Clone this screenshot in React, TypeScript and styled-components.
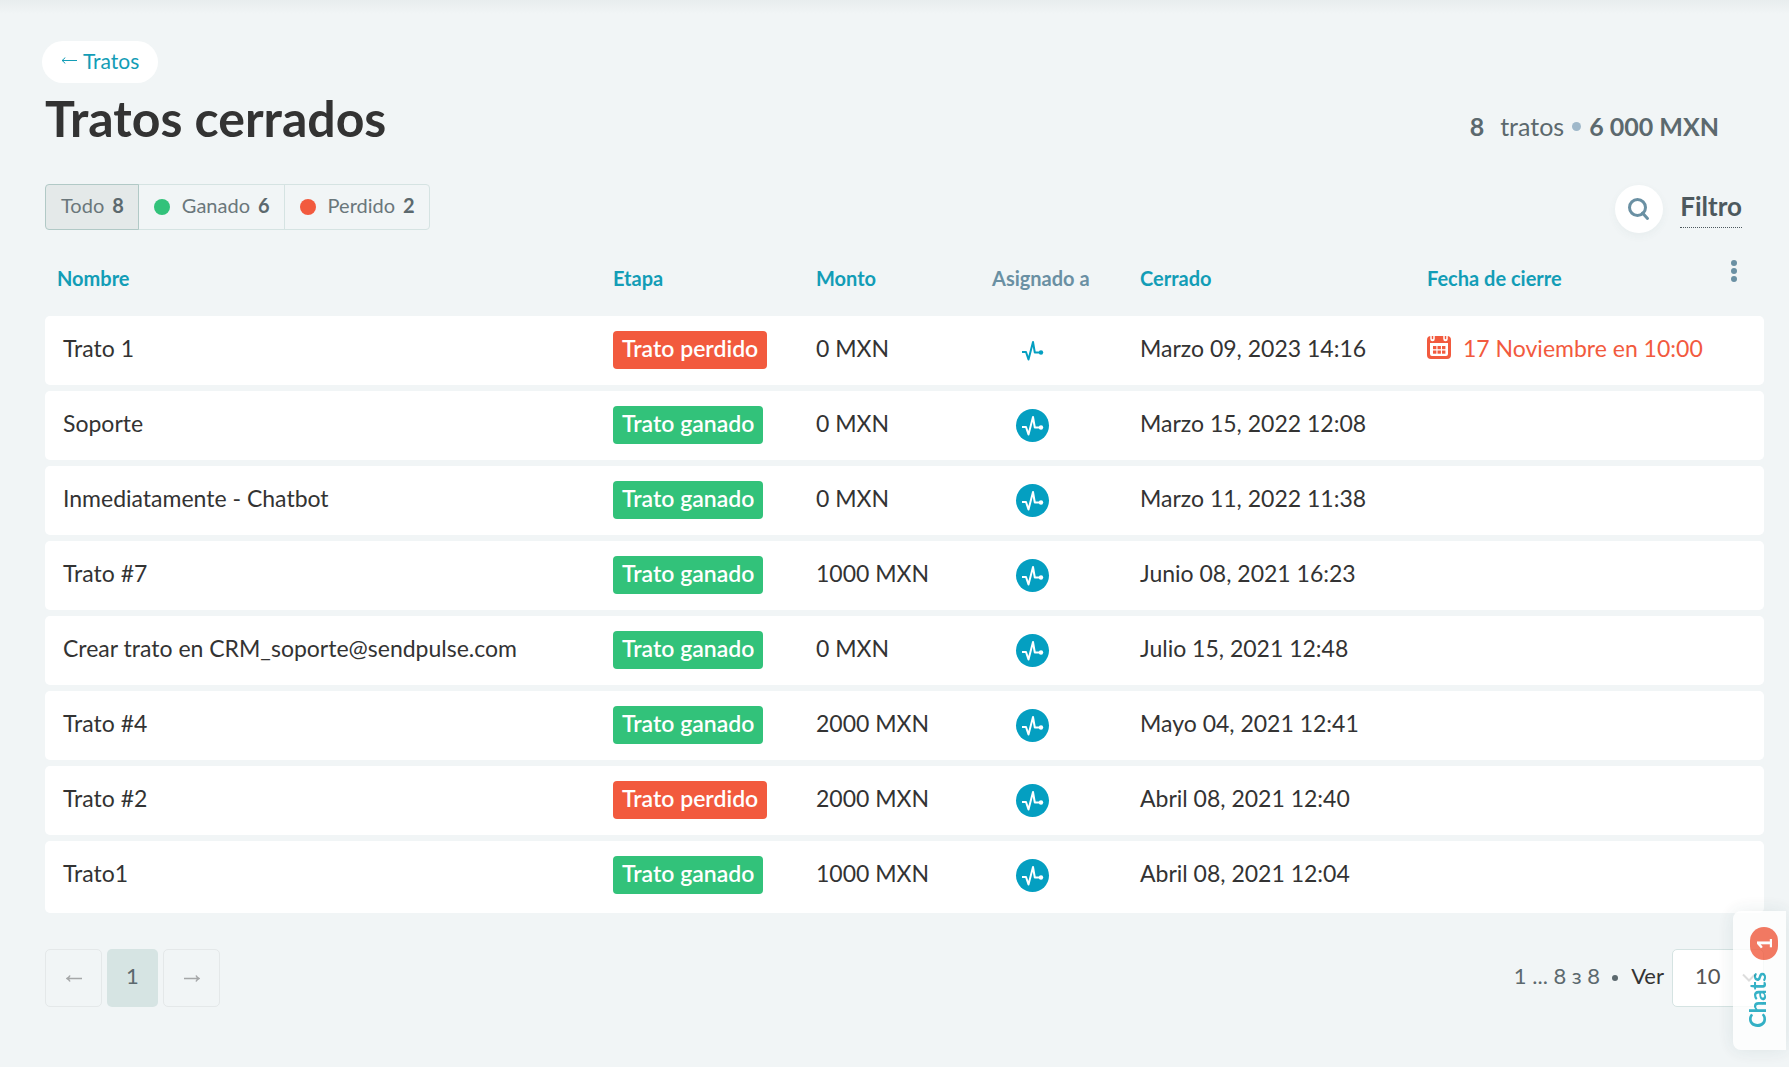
import React from "react";
import styled, { createGlobalStyle } from "styled-components";

const GlobalStyle = createGlobalStyle`
  *, *::before, *::after { box-sizing: border-box; }
  body {
    margin: 0;
    background: #f1f5f6;
    color: #333333;
    font-family: Lato, "Open Sans", sans-serif;
    font-size: 23px;
  }
  button, select { font: inherit; color: inherit; cursor: pointer; }
  a { text-decoration: none; }
`;

const Page = styled.div`
  position: relative;
  min-height: 100vh;
  padding: 41px 25px 60px 45px;
  background: linear-gradient(#e8edee, #f1f5f6 14px);
`;

const BackLink = styled.a`
  display: inline-flex;
  align-items: center;
  gap: 6px;
  height: 42px;
  margin-left: -3px;
  padding: 0 19px 4px 19px;
  border-radius: 21px;
  background: #ffffff;
  color: #139db6;
  font-size: 21px;
`;

const Header = styled.header`
  display: flex;
  align-items: flex-end;
  justify-content: space-between;
  padding: 5px 45px 0 0;
`;

const Title = styled.h1`
  margin: 0;
  font-size: 50px;
  line-height: 60px;
  font-weight: 700;
`;

const Summary = styled.div`
  display: flex;
  align-items: center;
  gap: 8px;
  padding-bottom: 7px;
  color: #5c696e;
  font-size: 25px;
  line-height: 30px;
`;

const Count = styled.strong`
  margin-right: 8px;
`;

const Dot = styled.span<{ $size: number; $color: string }>`
  flex: none;
  width: ${(p) => p.$size}px;
  height: ${(p) => p.$size}px;
  border-radius: 50%;
  background: ${(p) => p.$color};
`;

const Toolbar = styled.div`
  display: flex;
  align-items: flex-start;
  justify-content: space-between;
  margin-top: 36px;
  padding-right: 22px;
`;

const Tabs = styled.div`
  display: flex;
`;

const Tab = styled.button<{ $active?: boolean }>`
  display: flex;
  align-items: center;
  height: 46px;
  margin-left: -1px;
  padding: 0 14px 0 15px;
  border: 1px solid ${(p) => (p.$active ? "#b1c9c6" : "#d5e3e2")};
  background: ${(p) => (p.$active ? "#e4e9e9" : "transparent")};
  color: #6a777b;
  font-size: 20px;
  z-index: ${(p) => (p.$active ? 1 : 0)};
  &:first-child { margin-left: 0; border-radius: 4px 0 0 4px; }
  &:last-child { border-radius: 0 4px 4px 0; }
`;

const TabText = styled.span`
  display: flex;
  gap: 8px;
  padding-bottom: 5px;
  ${Dot} + & { margin-left: 12px; }
  strong { color: #5c696e; }
`;

const Actions = styled.div`
  display: flex;
  align-items: center;
  gap: 17px;
  padding-top: 1px;
`;

const SearchButton = styled.button`
  display: flex;
  align-items: center;
  justify-content: center;
  width: 48px;
  height: 48px;
  padding: 0;
  border: 0;
  border-radius: 50%;
  background: #ffffff;
  box-shadow: 0 3px 8px rgba(60, 90, 100, 0.05);
`;

const FilterButton = styled.button`
  padding: 0 0 4px;
  border: 0;
  border-bottom: 1px dotted #4d595e;
  background: none;
  color: #4d595e;
  font-size: 26px;
  line-height: 33px;
  font-weight: 700;
`;

const Table = styled.table`
  width: 100%;
  table-layout: fixed;
  border-collapse: separate;
  border-spacing: 0 6px;
`;

const Col = styled.col<{ $width?: number }>`
  width: ${(p) => (p.$width ? `${p.$width}px` : "auto")};
`;

const HeadCell = styled.th<{ $muted?: boolean }>`
  height: 71px;
  padding: 6px 0 0 12px;
  text-align: left;
  color: ${(p) => (p.$muted ? "#6a90a3" : "#139db6")};
  font-size: 20px;
  font-weight: 700;
  white-space: nowrap;
`;

const MenuButton = styled.button`
  display: flex;
  flex-direction: column;
  align-items: center;
  gap: 2px;
  margin: 0 0 14px 9px;
  padding: 0 4px;
  border: 0;
  background: none;
`;

const Cell = styled.td<{ $indent?: number; $centered?: boolean }>`
  height: 69px;
  padding: ${(p) => (p.$centered ? 0 : "0 0 6px")};
  padding-left: ${(p) => p.$indent ?? 12}px;
  background: #ffffff;
  white-space: nowrap;
  tr:last-child > & {
    height: 72px;
    padding-bottom: ${(p) => (p.$centered ? 3 : 9)}px;
  }
  &:first-child { border-radius: 5px 0 0 5px; }
  &:last-child { border-radius: 0 5px 5px 0; }
`;

const Stage = styled.span<{ $won: boolean }>`
  display: block;
  width: max-content;
  height: 38px;
  margin-bottom: 2px;
  padding: 0 9px;
  border-radius: 4px;
  background: ${(p) => (p.$won ? "#32c27a" : "#f25a3e")};
  color: #ffffff;
  font-weight: 600;
  line-height: 34px;
`;

const Avatar = styled.span<{ $filled: boolean }>`
  display: flex;
  width: 33px;
  height: 33px;
  border-radius: 50%;
  background: ${(p) => (p.$filled ? "#049fc1" : "transparent")};
  color: ${(p) => (p.$filled ? "#ffffff" : "#049fc1")};
`;

const DueDate = styled.span`
  display: flex;
  align-items: center;
  gap: 12px;
  color: #f25a3e;
`;

const Footer = styled.footer`
  display: flex;
  align-items: center;
  justify-content: space-between;
  margin-top: 30px;
  color: #5c696e;
  font-size: 22px;
`;

const Pager = styled.nav`
  display: flex;
  gap: 5px;
`;

const PageButton = styled.button<{ $current?: boolean }>`
  display: flex;
  align-items: center;
  justify-content: center;
  width: ${(p) => (p.$current ? 51 : 57)}px;
  height: 58px;
  padding: 0 0 ${(p) => (p.$current ? 5 : 0)}px;
  border: ${(p) => (p.$current ? "0" : "1px solid #e4e8e9")};
  border-radius: 5px;
  background: ${(p) => (p.$current ? "#d6e4e3" : "transparent")};
  color: ${(p) => (p.$current ? "#5c696e" : "#a5a7a8")};
`;

const PageSize = styled.div`
  display: flex;
  align-items: center;
`;

const Range = styled.span`
  margin-right: 12px;
  padding-bottom: 5px;
`;

const SizeLabel = styled.label`
  margin: 0 8px 0 13px;
  padding-bottom: 5px;
  color: #333333;
`;

const SelectBox = styled.div`
  display: grid;
  align-items: center;
  width: 92px;
  > * { grid-area: 1 / 1; }
  > svg { justify-self: end; margin-right: 8px; pointer-events: none; }
`;

const SizeSelect = styled.select`
  width: 100%;
  height: 58px;
  padding: 0 0 5px 22px;
  border: 1px solid #d5e3e2;
  border-radius: 5px;
  background: #ffffff;
  color: #555555;
  appearance: none;
`;

const ChatTab = styled.button`
  position: fixed;
  right: 3px;
  bottom: 17px;
  display: flex;
  flex-direction: column;
  align-items: center;
  gap: 12px;
  width: 53px;
  height: 139px;
  padding: 16px 0 0;
  border: 0;
  border-radius: 8px 0 0 8px;
  background: #ffffff;
  box-shadow: 0 0 18px rgba(60, 90, 100, 0.14);
  color: #049fb9;
  opacity: 0.8;
`;

const Sideways = styled.span`
  margin-right: 4px;
  writing-mode: vertical-rl;
  transform: rotate(180deg);
  font-size: 22px;
  line-height: 26px;
  font-weight: 700;
`;

const ChatBadge = styled.span`
  display: flex;
  align-items: center;
  justify-content: center;
  width: 28px;
  height: 33px;
  margin-left: 9px;
  border-radius: 14px;
  background: #f25a3e;
  color: #ffffff;
  font-size: 20px;
  font-weight: 900;
  > span {
    writing-mode: vertical-rl;
    transform: rotate(180deg);
    line-height: 24px;
  }
`;

function Arrow({ right, stroke = 1 }: { right?: boolean; stroke?: number }) {
  return (
    <svg width="16" height="10" viewBox="0 0 16 10" fill="none" stroke="currentColor" strokeWidth={stroke} aria-hidden="true">
      {right ? (
        <path d="M0 5.500h15M12 2.500q1 2 3 3q-2 1-3 3" />
      ) : (
        <path d="M16 5.500H1M4 2.500q-1 2-3 3q2 1 3 3" />
      )}
    </svg>
  );
}

function SearchIcon() {
  return (
    <svg width="24" height="24" viewBox="0 0 24 24" fill="none" stroke="#6a90a3" strokeWidth="3" strokeLinecap="round" aria-hidden="true">
      <circle cx="10.500" cy="10.500" r="8" />
      <path d="M15.500 16l5 5.500" />
    </svg>
  );
}

function PulseIcon() {
  return (
    <svg width="33" height="33" viewBox="0 0 33 33" fill="none" stroke="currentColor" strokeWidth="2" strokeLinejoin="round" aria-hidden="true">
      <path d="M6 18h4l2.500 7.500L17 8l1.800 10.500H25" />
      <circle cx="25" cy="18.500" r="2.200" fill="currentColor" stroke="none" />
    </svg>
  );
}

function CalendarIcon() {
  return (
    <svg width="24" height="24" viewBox="0 0 24 24" aria-hidden="true">
      <path fill="currentColor" fillRule="evenodd" d="M4 0h16a4 4 0 0 1 4 4v15a4 4 0 0 1-4 4H4a4 4 0 0 1-4-4V4a4 4 0 0 1 4-4zM3 7v11q0 2 2 2h14q2 0 2-2V7z" />
      <path d="M5.500 0v3M18.500 0v3" stroke="#ffffff" strokeWidth="4.500" strokeLinecap="round" />
      <path d="M5.500 0v2.500M18.500 0v2.500" stroke="currentColor" strokeWidth="1.500" strokeLinecap="round" />
      <g fill="currentColor">
        {[10, 14.5].map((y) => [6, 10.5, 15].map((x) => <rect key={`${x}-${y}`} x={x} y={y} width="3.400" height="3.200" />))}
      </g>
    </svg>
  );
}

interface Deal {
  name: string;
  won: boolean;
  amount: string;
  closed: string;
  due?: string;
}

const deals: Deal[] = [
  { name: "Trato 1", won: false, amount: "0 MXN", closed: "Marzo 09, 2023 14:16", due: "17 Noviembre en 10:00" },
  { name: "Soporte", won: true, amount: "0 MXN", closed: "Marzo 15, 2022 12:08" },
  { name: "Inmediatamente - Chatbot", won: true, amount: "0 MXN", closed: "Marzo 11, 2022 11:38" },
  { name: "Trato #7", won: true, amount: "1000 MXN", closed: "Junio 08, 2021 16:23" },
  { name: "Crear trato en CRM_soporte@sendpulse.com", won: true, amount: "0 MXN", closed: "Julio 15, 2021 12:48" },
  { name: "Trato #4", won: true, amount: "2000 MXN", closed: "Mayo 04, 2021 12:41" },
  { name: "Trato #2", won: false, amount: "2000 MXN", closed: "Abril 08, 2021 12:40" },
  { name: "Trato1", won: true, amount: "1000 MXN", closed: "Abril 08, 2021 12:04" },
];

export default function App() {
  return (
    <>
      <GlobalStyle />
      <Page>
        <BackLink href="#tratos">
          <Arrow />
          Tratos
        </BackLink>
        <Header>
          <Title>Tratos cerrados</Title>
          <Summary>
            <Count>8</Count>
            <span>tratos</span>
            <Dot $size={9} $color="#9fb8ca" />
            <strong>6 000 MXN</strong>
          </Summary>
        </Header>
        <Toolbar>
          <Tabs>
            <Tab $active>
              <TabText>Todo <strong>8</strong></TabText>
            </Tab>
            <Tab>
              <Dot $size={16} $color="#32c27a" />
              <TabText>Ganado <strong>6</strong></TabText>
            </Tab>
            <Tab>
              <Dot $size={16} $color="#f25a3e" />
              <TabText>Perdido <strong>2</strong></TabText>
            </Tab>
          </Tabs>
          <Actions>
            <SearchButton aria-label="Buscar">
              <SearchIcon />
            </SearchButton>
            <FilterButton>Filtro</FilterButton>
          </Actions>
        </Toolbar>
        <Table>
          <colgroup>
            <Col />
            <Col $width={203} />
            <Col $width={176} />
            <Col $width={148} />
            <Col $width={287} />
            <Col $width={291} />
            <Col $width={58} />
          </colgroup>
          <thead>
            <tr>
              <HeadCell>Nombre</HeadCell>
              <HeadCell>Etapa</HeadCell>
              <HeadCell>Monto</HeadCell>
              <HeadCell $muted>Asignado a</HeadCell>
              <HeadCell>Cerrado</HeadCell>
              <HeadCell>Fecha de cierre</HeadCell>
              <HeadCell>
                <MenuButton aria-label="Columnas">
                  <Dot $size={6} $color="#6a90a3" />
                  <Dot $size={6} $color="#6a90a3" />
                  <Dot $size={6} $color="#6a90a3" />
                </MenuButton>
              </HeadCell>
            </tr>
          </thead>
          <tbody>
            {deals.map((deal, index) => (
              <tr key={deal.name}>
                <Cell $indent={18}>{deal.name}</Cell>
                <Cell $centered>
                  <Stage $won={deal.won}>{deal.won ? "Trato ganado" : "Trato perdido"}</Stage>
                </Cell>
                <Cell>{deal.amount}</Cell>
                <Cell $centered $indent={36}>
                  <Avatar $filled={index > 0}>
                    <PulseIcon />
                  </Avatar>
                </Cell>
                <Cell>{deal.closed}</Cell>
                <Cell>
                  {deal.due && (
                    <DueDate>
                      <CalendarIcon />
                      {deal.due}
                    </DueDate>
                  )}
                </Cell>
                <Cell />
              </tr>
            ))}
          </tbody>
        </Table>
        <Footer>
          <Pager aria-label="Páginas">
            <PageButton disabled aria-label="Anterior">
              <Arrow stroke={1.5} />
            </PageButton>
            <PageButton $current>1</PageButton>
            <PageButton disabled aria-label="Siguiente">
              <Arrow right stroke={1.5} />
            </PageButton>
          </Pager>
          <PageSize>
            <Range>1 ... 8 з 8</Range>
            <Dot $size={6} $color="#5c696e" />
            <SizeLabel htmlFor="page-size">Ver</SizeLabel>
            <SelectBox>
              <SizeSelect id="page-size" defaultValue="10">
                <option>10</option>
                <option>25</option>
                <option>50</option>
              </SizeSelect>
              <svg width="14" height="10" viewBox="0 0 14 10" fill="none" stroke="#555555" strokeWidth="2" aria-hidden="true">
                <path d="M1 1.500l6 6 6-6" />
              </svg>
            </SelectBox>
          </PageSize>
        </Footer>
      </Page>
      <ChatTab>
        <ChatBadge>
          <span>1</span>
        </ChatBadge>
        <Sideways>Chats</Sideways>
      </ChatTab>
    </>
  );
}
